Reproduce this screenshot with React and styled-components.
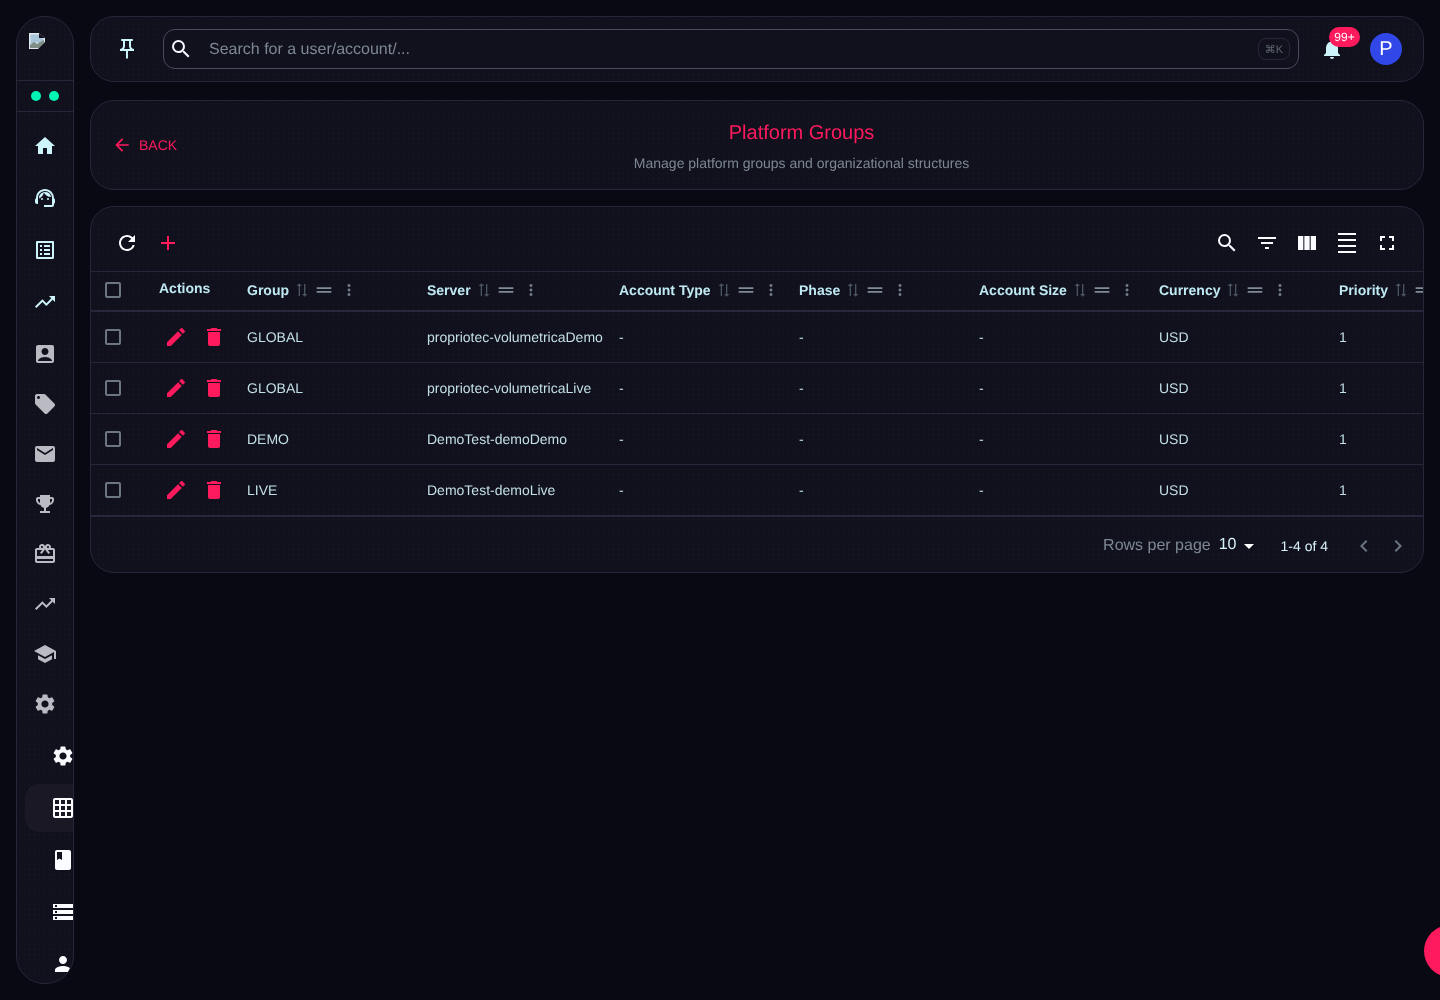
import styled, { createGlobalStyle } from 'styled-components';
import {
  MdAccountBox, MdAdd, MdArrowBack, MdArrowDropDown, MdBook, MdChevronLeft, MdChevronRight, MdDelete,
  MdDensitySmall, MdDragHandle, MdEdit, MdEmail, MdEmojiEvents, MdFilterList, MdFullscreen, MdGridOn,
  MdHome, MdLocalOffer, MdMoreVert, MdNotifications, MdOutlineCardGiftcard, MdOutlineListAlt,
  MdOutlinePushPin, MdPerson, MdRefresh, MdSchool, MdSearch, MdSettings, MdStorage, MdSupportAgent,
  MdSyncAlt, MdTrendingUp, MdViewColumn,
} from 'react-icons/md';

const GlobalStyle = createGlobalStyle`
  * { box-sizing: border-box; }
  html, body { margin: 0; padding: 0; height: 100%; background: #080913; }
  body {
    font-family: 'Liberation Sans', Arial, sans-serif;
    overflow: hidden;
    text-rendering: geometricPrecision;
    -webkit-font-smoothing: antialiased;
  }
`;

const dots = `
  background-color: #10111d;
  background-image: radial-gradient(rgba(255,255,255,0.035) 0.6px, transparent 0.8px);
  background-size: 5px 5px;
`;

const Page = styled.div`
  width: 1440px;
  height: 1000px;
  padding: 16px;
  display: flex;
  gap: 16px;
  overflow: hidden;
  position: relative;
  will-change: transform;
`;

const Sidebar = styled.aside`
  ${dots}
  width: 58px;
  height: 968px;
  flex: none;
  border: 1px solid #26273a;
  border-radius: 28px;
  overflow: hidden;
  display: flex;
  flex-direction: column;
`;

const LogoSlot = styled.div`
  height: 64px;
  flex: none;
  padding: 16px 0 0 12px;
  border-bottom: 1px solid #26273a;
`;

const StatusRow = styled.div`
  height: 31px;
  flex: none;
  display: flex;
  align-items: center;
  justify-content: center;
  gap: 8px;
  padding-right: 1px;
  border-bottom: 1px solid #26273a;
`;

const StatusDot = styled.span`
  width: 10px;
  height: 10px;
  border-radius: 50%;
  background: #00f5b4;
`;

const NavList = styled.nav`
  display: flex;
  flex-direction: column;
  flex: none;
  padding-top: 8px;
`;

const NavGroup = styled.div`
  display: flex;
  flex-direction: column;
  flex: none;
  & + & { margin-top: 1px; }
`;

const NavItem = styled.div`
  height: ${(p) => p.$h}px;
  flex: none;
  display: flex;
  align-items: center;
  justify-content: center;
  color: ${(p) => p.$color};
  padding-right: 1px;
  font-size: 24px;
`;

const SubItem = styled.div`
  flex: none;
  display: flex;
  align-items: center;
  margin-left: 8px;
  padding-left: 26px;
  color: #fbfcff;
  font-size: 24px;
  white-space: nowrap;
  border-radius: 14px 0 0 14px;
  background: ${(p) => (p.$active ? '#1b1825' : 'transparent')};
  height: ${(p) => (p.$active ? 48 : 52)}px;
  margin-top: ${(p) => (p.$active ? 2 : 0)}px;
  margin-bottom: ${(p) => (p.$active ? 2 : 0)}px;
  svg { flex: none; }
`;

const Main = styled.main`
  flex: 1;
  min-width: 0;
  display: flex;
  flex-direction: column;
`;

const Card = styled.section`
  ${dots}
  border: 1px solid #26273a;
  border-radius: 24px;
`;

const TopBar = styled(Card)`
  height: 66px;
  flex: none;
  display: flex;
  align-items: center;
  padding: 0 21px 0 24px;
  margin-bottom: 18px;
`;

const PinButton = styled.div`
  width: 24px;
  display: flex;
  color: #cdf3fb;
  font-size: 24px;
  margin-right: 24px;
`;

const SearchBox = styled.div`
  flex: 1;
  height: 40px;
  display: flex;
  align-items: center;
  padding: 0 8px 0 5px;
  border: 1px solid #4a4b5c;
  border-radius: 12px;
  background: #10111c;
`;

const SearchIcon = styled.div`
  display: flex;
  color: #f5f8ff;
  font-size: 24px;
  margin-right: 16px;
`;

const Placeholder = styled.div`
  flex: 1;
  padding-top: 1px;
  font-size: 16px;
  color: #7d8893;
`;

const Kbd = styled.span`
  font-size: 11px;
  padding: 0 6px;
  height: 22px;
  line-height: 22px;
  border: 1px solid #26273a;
  border-radius: 8px;
  color: #5f6772;
`;

const BellWrap = styled.div`
  position: relative;
  display: flex;
  margin-left: 21px;
  color: #cdf3fb;
  font-size: 24px;
`;

const Badge = styled.span`
  position: absolute;
  top: -10px;
  left: 9px;
  height: 20px;
  padding: 0 5px;
  min-width: 31px;
  line-height: 20px;
  text-align: center;
  border-radius: 10px;
  background: #ff1a5e;
  color: #fff;
  font-size: 12px;
`;

const Avatar = styled.div`
  width: 32px;
  height: 32px;
  margin-left: 26px;
  border-radius: 50%;
  background: #3247e8;
  color: #fff;
  font-size: 20px;
  display: flex;
  align-items: center;
  justify-content: center;
`;

const HeaderCard = styled(Card)`
  height: 90px;
  flex: none;
  display: flex;
  align-items: center;
  gap: 25px;
  padding: 0 22px 0 21px;
  margin-bottom: 16px;
`;

const BackLink = styled.div`
  display: flex;
  align-items: center;
  gap: 7px;
  font-size: 14px;
  color: #ff1a5e;
  svg { font-size: 20px; }
`;

const TitleBlock = styled.div`
  flex: 1;
  text-align: center;
  padding-top: 3px;
`;

const Title = styled.h1`
  margin: 0 0 8px;
  font-size: 20px;
  line-height: 24px;
  font-weight: 400;
  color: #ff1a5e;
`;

const Subtitle = styled.p`
  margin: 0;
  font-size: 14px;
  line-height: 20px;
  color: #7d8893;
`;

const TableCard = styled(Card)`
  height: 367px;
  flex: none;
  overflow: hidden;
  display: flex;
  flex-direction: column;
`;

const Toolbar = styled.div`
  height: 64px;
  flex: none;
  display: flex;
  align-items: center;
  justify-content: space-between;
  padding: 8px 24px 0 24px;
`;

const ToolGroup = styled.div`
  display: flex;
  align-items: center;
  gap: ${(p) => p.$gap}px;
`;

const ToolIcon = styled.span`
  display: flex;
  font-size: 24px;
  color: ${(p) => p.$color || '#fbfcff'};
`;

const Grid = styled.div`
  display: grid;
  grid-template-columns: 68px 88px 180px 192px 180px 180px 180px 180px 180px;
  width: 1428px;
  flex: none;
`;

const HeadRow = styled(Grid)`
  height: 41px;
  padding-bottom: 2px;
  border-top: 1px solid #26273a;
  border-bottom: 2px solid #26273a;
  align-items: center;
`;

const BodyRow = styled(Grid)`
  height: 51px;
  align-items: center;
  border-bottom: 1px solid #26273a;
`;

const CheckCell = styled.div`
  padding-left: 14px;
  display: flex;
`;

const CheckBox = styled.span`
  width: 16px;
  height: 16px;
  border: 2px solid #6c7680;
  border-radius: 2px;
`;

const HeadCell = styled.div`
  display: flex;
  align-items: center;
  font-size: 14px;
  font-weight: 700;
  color: #bfe9f3;
  white-space: nowrap;
  position: relative;
  top: ${(p) => p.$top || 0}px;
`;

const SortIcon = styled(MdSyncAlt)`
  transform: rotate(90deg);
  font-size: 16px;
  color: #4a5560;
  margin-left: 5px;
`;

const DragIcon = styled(MdDragHandle)`
  font-size: 22px;
  color: #7f8b96;
  margin-left: 3px;
`;

const MoreIcon = styled(MdMoreVert)`
  font-size: 18px;
  color: #6f7a85;
  margin-left: 5px;
`;

const ActionCell = styled.div`
  display: flex;
  align-items: center;
  gap: 14px;
  padding-left: 5px;
  font-size: 24px;
  color: #ff1a5e;
`;

const Cell = styled.div`
  font-size: 14px;
  color: #c3dfe7;
  white-space: nowrap;
`;

const Pagination = styled.div`
  flex: 1;
  display: flex;
  align-items: center;
  justify-content: flex-end;
  padding: 3px 13px 0 0;
  border-top: 1px solid #26273a;
`;

const RowsLabel = styled.span`
  font-size: 16px;
  color: #7d8893;
  margin-right: 8px;
`;

const RowsValue = styled.span`
  font-size: 16px;
  color: #d9f3f9;
  position: relative;
  top: -1px;
`;

const DropIcon = styled(MdArrowDropDown)`
  font-size: 24px;
  color: #fff;
  margin-right: 20px;
`;

const RangeText = styled.span`
  font-size: 14px;
  color: #d9f3f9;
  margin-right: 14px;
`;

const PageIcon = styled.span`
  display: flex;
  font-size: 24px;
  color: #69747f;
  margin-left: 10px;
`;

const Fab = styled.div`
  position: absolute;
  left: 1424px;
  top: 925px;
  width: 52px;
  height: 52px;
  border-radius: 50%;
  background: #ff1a5e;
`;

const BrokenImage = () => (
  <svg width="16" height="16" viewBox="0 0 16 16">
    <path d="M0 0h10l6 5v11H0z" fill="#dfe8ea" />
    <path d="M1.5 1.5h8l5 4.5v2L11 11l-3-2-4 3-2.5-1z" fill="#a8c4d8" />
    <path d="M1 12l4-3 3 2 3-2 4-2v3l-5 5H1z" fill="#7f8f88" />
    <path d="M16 9v7H9z" fill="#10111d" />
    <path d="M10 0l6 5h-6z" fill="#10111d" />
  </svg>
);

const primaryNav = [MdHome, MdSupportAgent, MdOutlineListAlt, MdTrendingUp];

const secondaryNav = [
  MdAccountBox, MdLocalOffer, MdEmail, MdEmojiEvents, MdOutlineCardGiftcard, MdTrendingUp, MdSchool, MdSettings,
];

const subItems = [
  { icon: MdSettings },
  { icon: MdGridOn, active: true },
  { icon: MdBook },
  { icon: MdStorage },
  { icon: MdPerson },
];

const columns = ['Group', 'Server', 'Account Type', 'Phase', 'Account Size', 'Currency', 'Priority'];

const rows = [
  ['GLOBAL', 'propriotec-volumetricaDemo'],
  ['GLOBAL', 'propriotec-volumetricaLive'],
  ['DEMO', 'DemoTest-demoDemo'],
  ['LIVE', 'DemoTest-demoLive'],
];

export default function App() {
  return (
    <>
      <GlobalStyle />
      <Page>
        <Sidebar>
          <LogoSlot><BrokenImage /></LogoSlot>
          <StatusRow><StatusDot /><StatusDot /></StatusRow>
          <NavList>
            <NavGroup>
              {primaryNav.map((Icon, i) => (
                <NavItem key={i} $color="#cdf3fb" $h={52}><Icon /></NavItem>
              ))}
            </NavGroup>
            <NavGroup>
              {secondaryNav.map((Icon, i) => (
                <NavItem key={i} $color="#b9bac2" $h={50}><Icon /></NavItem>
              ))}
            </NavGroup>
            <NavGroup>
              {subItems.map((item, i) => (
                <SubItem key={i} $active={item.active}><item.icon /></SubItem>
              ))}
            </NavGroup>
          </NavList>
        </Sidebar>
        <Main>
          <TopBar>
            <PinButton><MdOutlinePushPin /></PinButton>
            <SearchBox>
              <SearchIcon><MdSearch /></SearchIcon>
              <Placeholder>Search for a user/account/...</Placeholder>
              <Kbd>⌘K</Kbd>
            </SearchBox>
            <BellWrap>
              <MdNotifications />
              <Badge>99+</Badge>
            </BellWrap>
            <Avatar>P</Avatar>
          </TopBar>
          <HeaderCard>
            <BackLink><MdArrowBack />BACK</BackLink>
            <TitleBlock>
              <Title>Platform Groups</Title>
              <Subtitle>Manage platform groups and organizational structures</Subtitle>
            </TitleBlock>
          </HeaderCard>
          <TableCard>
            <Toolbar>
              <ToolGroup $gap={17}>
                <ToolIcon><MdRefresh /></ToolIcon>
                <ToolIcon $color="#ff1a5e"><MdAdd /></ToolIcon>
              </ToolGroup>
              <ToolGroup $gap={16}>
                <ToolIcon><MdSearch /></ToolIcon>
                <ToolIcon><MdFilterList /></ToolIcon>
                <ToolIcon><MdViewColumn /></ToolIcon>
                <ToolIcon><MdDensitySmall /></ToolIcon>
                <ToolIcon><MdFullscreen /></ToolIcon>
              </ToolGroup>
            </Toolbar>
            <HeadRow>
              <CheckCell><CheckBox /></CheckCell>
              <HeadCell $top={-2}>Actions</HeadCell>
              {columns.map((c) => (
                <HeadCell key={c}>
                  {c}<SortIcon /><DragIcon /><MoreIcon />
                </HeadCell>
              ))}
            </HeadRow>
            {rows.map((r, i) => (
              <BodyRow key={i}>
                <CheckCell><CheckBox /></CheckCell>
                <ActionCell><MdEdit /><MdDelete /></ActionCell>
                <Cell>{r[0]}</Cell>
                <Cell>{r[1]}</Cell>
                <Cell>-</Cell>
                <Cell>-</Cell>
                <Cell>-</Cell>
                <Cell>USD</Cell>
                <Cell>1</Cell>
              </BodyRow>
            ))}
            <Pagination>
              <RowsLabel>Rows per page</RowsLabel>
              <RowsValue>10</RowsValue>
              <DropIcon />
              <RangeText>1-4 of 4</RangeText>
              <PageIcon><MdChevronLeft /></PageIcon>
              <PageIcon><MdChevronRight /></PageIcon>
            </Pagination>
          </TableCard>
        </Main>
        <Fab />
      </Page>
    </>
  );
}
